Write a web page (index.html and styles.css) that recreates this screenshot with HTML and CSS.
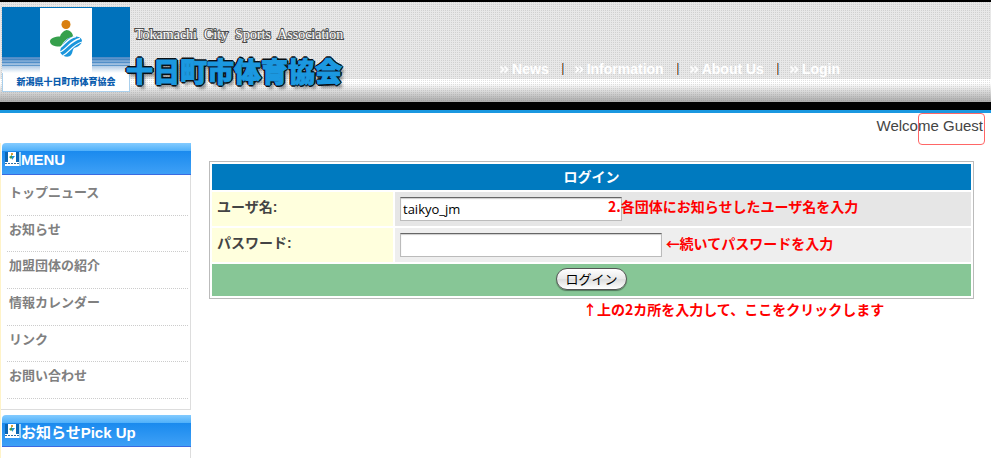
FILE: index.html
```
<!DOCTYPE html>
<html lang="ja">

<head>
    <meta charset="UTF-8">
    <meta name="viewport" content="width=device-width, initial-scale=1.0">
    <title>十日町市体育協会 - ログイン</title>
    <link rel="stylesheet" href="styles.css">
</head>

<body>
    <!-- Shared icons -->
    <svg class="icon-defs" width="0" height="0" aria-hidden="true">
        <symbol id="chevrons" viewBox="0 0 9 7">
            <path d="M0.5 0.5L3.5 3.5L0.5 6.5M4.5 0.5L7.5 3.5L4.5 6.5" fill="none" stroke="#fff" stroke-width="1.6" />
        </symbol>
        <symbol id="mini-logo" viewBox="0 0 16 14">
            <rect width="14" height="14" fill="#fff" />
            <rect width="3" height="10" fill="#0a66b4" />
            <rect x="11" width="3" height="10" fill="#0a66b4" />
            <rect x="14" width="2" height="14" fill="#a5d4f5" />
            <rect x="6" y="1" width="2" height="2" fill="#d9a03c" />
            <path d="M4 5L7 3L7 6L6 7Z" fill="#3a9a50" />
            <path d="M7 4L10 4L7 8Z" fill="#1b8fd8" />
            <path d="M0 11.5H14" stroke="#2d6ea8" stroke-dasharray="2 1" />
        </symbol>
    </svg>

    <header class="header">
        <a href="#" class="logo">
            <svg class="logo-mark" viewBox="0 0 128 85" role="img" aria-label="新潟県十日町市体育協会">
                <defs>
                    <linearGradient id="fade" x1="0" y1="0" x2="0" y2="1">
                        <stop offset="0" stop-color="#4a88c5" />
                        <stop offset="1" stop-color="#fff" />
                    </linearGradient>
                </defs>
                <rect x="0.5" y="0.5" width="127" height="84" fill="#fff" stroke="#a9cfec" />
                <rect width="128" height="50" fill="#0072bc" />
                <rect y="50" width="128" height="16" fill="url(#fade)" />
                <path d="M0 52.5H128M0 55.5H128M0 58.5H128" stroke="#2d78bd" stroke-opacity="0.6" />
                <rect x="38" y="1" width="52" height="66" fill="#fff" />
                <circle cx="64" cy="17.5" r="4.5" fill="#d97f0e" />
                <path d="M64.500 23C61 24 58.500 27 58 29.500C53 29.500 48 31 48 34.500C48 38 53 40 59 39.500C62 34 65 31 71 29.500C71 26 68 23 64.500 23Z" fill="#36a04c" />
                <path d="M59 40L58 45C60 50 67 51 69 48C71 46 70 43 72 41C76 40 80 37 80 34C80 30 75 29 71 29.500C65 31 62 35 59 40Z" fill="#1b96dc" />
                <path d="M57 41.500C63 38 65 31 74 29.500M58 45C65 42 68 34 78 31.500M61 48.500C68 45 70 38 80 35" fill="none" stroke="#fff" stroke-width="1.3" />
                <text class="logo-text" x="64" y="78" text-anchor="middle">新潟県十日町市体育協会</text>
            </svg>
            <span class="site-name">
                <span class="site-name-en">Tokamachi&nbsp; City&nbsp; Sports&nbsp; Association</span>
                <span class="site-name-ja">十日町市体育協会</span>
            </span>
        </a>
        <nav class="nav-bar">
            <a href="#"><svg class="chevrons"><use href="#chevrons" /></svg>News</a>
            <a href="#"><svg class="chevrons"><use href="#chevrons" /></svg>Information</a>
            <a href="#"><svg class="chevrons"><use href="#chevrons" /></svg>About Us</a>
            <a href="#"><svg class="chevrons"><use href="#chevrons" /></svg>Login</a>
        </nav>
    </header>

    <div class="container">
        <!-- Side menu -->
        <aside class="sidebar">
            <section class="block">
                <h2 class="block-title"><svg class="mini-logo"><use href="#mini-logo" /></svg>MENU</h2>
                <ul class="menu">
                    <li><a href="#">トップニュース</a></li>
                    <li><a href="#">お知らせ</a></li>
                    <li><a href="#">加盟団体の紹介</a></li>
                    <li><a href="#">情報カレンダー</a></li>
                    <li><a href="#">リンク</a></li>
                    <li><a href="#">お問い合わせ</a></li>
                </ul>
            </section>
            <section class="block">
                <h2 class="block-title"><svg class="mini-logo"><use href="#mini-logo" /></svg>お知らせPick Up</h2>
                <div class="block-body"></div>
            </section>
        </aside>

        <main class="content">
            <p class="welcome">Welcome Guest<span class="marker"></span></p>

            <!-- Login form -->
            <form class="login-form">
                <table class="login-table">
                    <colgroup>
                        <col class="col-label">
                        <col>
                    </colgroup>
                    <thead>
                        <tr>
                            <th colspan="2">ログイン</th>
                        </tr>
                    </thead>
                    <tbody>
                        <tr class="even">
                            <td class="label"><label for="uname">ユーザ名:</label></td>
                            <td class="field">
                                <input type="text" id="uname" class="input-name" value="taikyo_jm">
                                <span class="note note-name">2.各団体にお知らせしたユーザ名を入力</span>
                            </td>
                        </tr>
                        <tr class="odd">
                            <td class="label"><label for="pass">パスワード:</label></td>
                            <td class="field">
                                <input type="password" id="pass" class="input-pass">
                                <span class="note">←続いてパスワードを入力</span>
                            </td>
                        </tr>
                    </tbody>
                    <tfoot>
                        <tr>
                            <td colspan="2"><button type="button" class="login-button">ログイン</button></td>
                        </tr>
                    </tfoot>
                </table>
                <p class="note note-submit">↑上の2カ所を入力して、ここをクリックします</p>
            </form>
        </main>
    </div>
</body>

</html>
```
FILE: styles.css
```
/* Base Styles */
* {
    box-sizing: border-box;
}

body {
    font-family: "Liberation Sans", "Noto Sans CJK JP", sans-serif;
    background-color: #fff;
    margin: 0;
    color: #444;
    font-size: 13px;
    display: flex;
    flex-direction: column;
    min-height: 100vh;
}

.icon-defs {
    position: absolute;
}

/* Header */
.header {
    display: flex;
    align-items: flex-start;
    justify-content: space-between;
    height: 113px;
    padding: 5px 151px 0 2px;
    border-top: 2px solid #000;
    border-bottom: 3px solid #1b98e0;
    box-shadow: inset 0 -8px #000;
    background-color: #e8e8e8;
    background-image:
        conic-gradient(rgba(110, 110, 110, 0.2) 25%, transparent 0),
        linear-gradient(to bottom, transparent 77px, #fff 77px, #fff 81px, #aaa 100px);
    background-size: 2px 2px, 100% 100%;
}

.logo {
    display: flex;
    text-decoration: none;
}

.logo-mark {
    width: 128px;
    height: 85px;
    flex: none;
}

.logo-text {
    font-family: "Noto Sans CJK JP", sans-serif;
    font-size: 9px;
    font-weight: 900;
    fill: #0a5cad;
}

.site-name {
    display: flex;
    flex-direction: column;
    margin-left: -4px;
    padding-top: 19px;
    white-space: nowrap;
}

.site-name-en {
    padding-left: 9px;
    font-family: "Liberation Serif", serif;
    font-size: 14px;
    line-height: 18px;
    color: #fff;
    -webkit-text-stroke: 2px #333;
    paint-order: stroke fill;
    text-shadow: 0 0 5px #fff;
}

.site-name-ja {
    font-family: "Noto Sans CJK JP", sans-serif;
    font-size: 27px;
    font-weight: 900;
    line-height: 53px;
    color: #1b98e0;
    -webkit-text-stroke: 1px #1b98e0;
    text-shadow:
        -2px 0 #0a1014, 2px 0 #0a1014, 0 -2px #0a1014, 0 2px #0a1014,
        -1px -1px #0a1014, 1px -1px #0a1014, -1px 1px #0a1014, 1px 1px #0a1014,
        3px 4px 3px rgba(0, 0, 0, 0.4);
}

.nav-bar {
    display: flex;
    padding-top: 54px;
    white-space: nowrap;
}

.nav-bar a {
    display: flex;
    align-items: center;
    gap: 3px;
    color: #fff;
    font-size: 14px;
    font-weight: bold;
    line-height: 16px;
    text-decoration: none;
}

.nav-bar a + a::before {
    content: "";
    height: 12px;
    margin: 0 8px 0 13px;
    border-left: 1px solid #c07030;
    border-right: 1px solid #6fa5d5;
}

.chevrons {
    width: 9px;
    height: 7px;
}

/* Layout */
.container {
    display: flex;
    flex: 1;
}

.sidebar {
    display: flex;
    flex-direction: column;
    width: 191px;
    flex: none;
    gap: 5px;
    margin-top: 30px;
    border-left: 1px solid #fff3c8;
}

.block:last-child {
    display: flex;
    flex: 1;
    flex-direction: column;
}

.block-title {
    display: flex;
    align-items: center;
    height: 32px;
    margin: 0 0 0 1px;
    padding: 2px 3px 0;
    border-bottom: 1px solid #3a6ae0;
    border-top-left-radius: 4px;
    background: linear-gradient(to bottom, #84ccff, #4fb0fa 8px, #1a8aee 8px, #3ea0f6);
    color: #fff;
    font-size: 15px;
}

.mini-logo {
    width: 16px;
    height: 14px;
    margin-bottom: 2px;
}

.menu,
.block-body {
    margin: 0;
    padding: 4px 2px 10px 6px;
    border: 1px solid #ddd;
    border-width: 0 1px 1px 0;
}

.block-body {
    flex: 1;
}

.menu {
    display: grid;
    grid-auto-rows: 1fr;
    min-height: 235px;
}

.menu li {
    list-style: none;
    padding: 4px 2px 0;
    border-bottom: 1px dotted #ccc;
    line-height: 20px;
}

.menu a {
    color: #808080;
    font-weight: bold;
    text-decoration: none;
}

.content {
    flex: 1;
    padding: 0 17px 0 18px;
}

.welcome {
    position: relative;
    margin: 0 -9px 22px;
    font-size: 15px;
    line-height: 26px;
    text-align: right;
}

.marker {
    position: absolute;
    top: 0;
    right: -2px;
    width: 67px;
    height: 32px;
    border: 1px solid #f66;
    border-radius: 4px;
}

/* Login Form */
.login-table {
    width: 100%;
    border: 1px solid #bbb;
    border-spacing: 2px;
    table-layout: fixed;
}

.col-label {
    width: 181px;
}

.login-table th {
    height: 26px;
    padding: 0;
    background-color: #007abf;
    color: #fff;
    font-size: 14px;
    line-height: 20px;
}

.login-table td {
    height: 34px;
    padding: 5px;
    vertical-align: top;
}

.login-table .label {
    background-color: #ffd;
    font-size: 14px;
    font-weight: bold;
    line-height: 20px;
}

.field {
    position: relative;
    white-space: nowrap;
}

.even .field {
    background-color: #e6e6e6;
}

.odd .field {
    background-color: #eee;
}

.field input {
    height: 24px;
    padding: 0 2px;
    border: 1px solid #bbb;
    border-top: 1px solid #666;
    background-color: #fff;
    box-shadow: inset 0 1px 1px #ccc;
    color: #000;
    font-family: "Open Sans", sans-serif;
    font-size: 13px;
    vertical-align: top;
}

.input-name {
    width: 222px;
}

.input-pass {
    width: 262px;
}

.login-table tfoot td {
    height: 32px;
    padding: 4px;
    background-color: #87c696;
    text-align: center;
}

.login-button {
    height: 22px;
    padding: 0 8px;
    border: 1px solid #555;
    border-radius: 11px;
    background: linear-gradient(to bottom, #fff, #e8e8e8 50%, #ddd 51%, #fff);
    box-shadow: 0 1px 1px rgba(0, 0, 0, 0.4);
    color: #000;
    font-family: "Noto Sans CJK JP", sans-serif;
    font-size: 13px;
    line-height: 18px;
}

.note {
    color: #f00;
    font-family: "Noto Sans CJK JP", sans-serif;
    font-size: 14px;
    font-weight: bold;
    line-height: 20px;
}

.note-name {
    position: absolute;
    top: 4px;
    left: 213px;
}

.note-submit {
    margin: 0;
    padding-left: 374px;
    white-space: nowrap;
}
```
